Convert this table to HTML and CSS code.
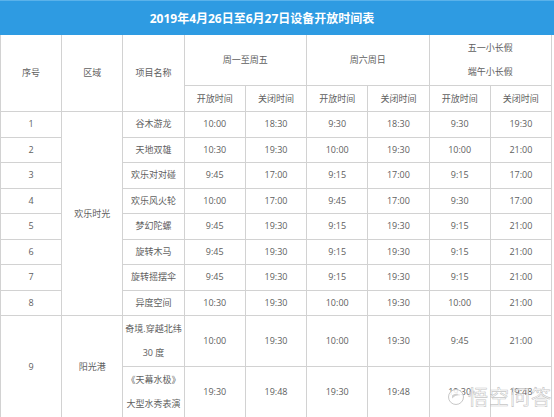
FILE: index.html
```html
<!DOCTYPE html>
<html lang="zh-CN">
<head>
<meta charset="utf-8">
<title>设备开放时间表</title>
<link rel="stylesheet" href="styles.css">
</head>
<body>
<div class="page">
  <div class="title">2019年4月26日至6月27日设备开放时间表</div>
  <table class="sched">
    <colgroup>
      <col><col><col><col><col><col><col><col><col>
    </colgroup>
    <tr class="h1">
      <td rowspan="2">序号</td>
      <td rowspan="2">区域</td>
      <td rowspan="2">项目名称</td>
      <td colspan="2">周一至周五</td>
      <td colspan="2">周六周日</td>
      <td colspan="2" class="two">五一小长假<br>端午小长假</td>
    </tr>
    <tr class="h2">
      <td>开放时间</td><td>关闭时间</td>
      <td>开放时间</td><td>关闭时间</td>
      <td>开放时间</td><td>关闭时间</td>
    </tr>
    <tr class="r"><td>1</td><td rowspan="8">欢乐时光</td><td>谷木游龙</td><td>10:00</td><td>18:30</td><td>9:30</td><td>18:30</td><td>9:30</td><td>19:30</td></tr>
    <tr class="r"><td>2</td><td>天地双雄</td><td>10:30</td><td>19:30</td><td>10:00</td><td>19:30</td><td>10:00</td><td>21:00</td></tr>
    <tr class="r"><td>3</td><td>欢乐对对碰</td><td>9:45</td><td>17:00</td><td>9:15</td><td>17:00</td><td>9:15</td><td>17:00</td></tr>
    <tr class="r"><td>4</td><td>欢乐风火轮</td><td>10:00</td><td>17:00</td><td>9:45</td><td>17:00</td><td>9:30</td><td>17:00</td></tr>
    <tr class="r"><td>5</td><td>梦幻陀螺</td><td>9:45</td><td>19:30</td><td>9:15</td><td>19:30</td><td>9:15</td><td>21:00</td></tr>
    <tr class="r"><td>6</td><td>旋转木马</td><td>9:45</td><td>19:30</td><td>9:15</td><td>19:30</td><td>9:15</td><td>21:00</td></tr>
    <tr class="r"><td>7</td><td>旋转摇摆伞</td><td>9:45</td><td>19:30</td><td>9:15</td><td>19:30</td><td>9:15</td><td>21:00</td></tr>
    <tr class="r"><td>8</td><td>异度空间</td><td>10:30</td><td>19:30</td><td>10:00</td><td>19:30</td><td>10:00</td><td>21:00</td></tr>
    <tr class="big"><td rowspan="2">9</td><td rowspan="2">阳光港</td><td class="two">奇境.穿越北纬<br>30 度</td><td>10:00</td><td>19:30</td><td>10:00</td><td>19:30</td><td>9:45</td><td>21:00</td></tr>
    <tr class="big"><td class="two">《天幕水极》<br>大型水秀表演</td><td>19:30</td><td>19:48</td><td>19:30</td><td>19:48</td><td>19:30</td><td>19:48</td></tr>
  </table>
  <div class="mark">
    <svg class="mark-logo" width="18" height="18" viewBox="0 0 18 18">
      <circle cx="9" cy="9" r="7.5" fill="rgba(255,255,255,0.85)" stroke="#c8c8c8" stroke-width="1"/>
      <path d="M5 7.5 Q9 4 13 7.5 Q9 6.5 5 10.5 Z" fill="#d0d0d0"/>
    </svg>
    <span class="mark-text">悟空问答</span>
  </div>
</div>
</body>
</html>
```
FILE: styles.css
```css
html, body {
  margin: 0;
  padding: 0;
  background: #ffffff;
}
.page {
  position: relative;
  width: 554px;
  height: 417px;
  overflow: hidden;
  font-family: "Open Sans", "Noto Sans CJK SC", sans-serif;
}
.title {
  height: 35px;
  line-height: 35px;
  background: #2e9be2;
  border-top: 1px solid #5ab2ea;
  box-sizing: border-box;
  padding-right: 30px;
  color: #ffffff;
  font-weight: bold;
  font-size: 12px;
  text-align: center;
  font-family: "Open Sans", "Noto Sans CJK SC", sans-serif;
}
.sched {
  width: 552px;
  table-layout: fixed;
  border-collapse: collapse;
  color: #606060;
  font-size: 9px;
}
.sched td {
  border: 1px solid #d2d2d2;
  text-align: center;
  vertical-align: middle;
  padding: 0;
  line-height: 12px;
}
.sched tr:first-child td {
  border-top: none;
}
.h1 td { height: 50px; }
.h2 td { height: 25px; }
.r td { height: 24.5px; }
.big td { height: 50px; }
.sched td.two {
  line-height: 24.5px;
}
.mark {
  position: absolute;
  right: 2px;
  bottom: 6px;
  display: flex;
  align-items: center;
  gap: 3px;
}
.mark-text {
  font-size: 20px;
  color: rgba(255, 255, 255, 0.75);
  -webkit-text-stroke: 0.6px rgba(170, 170, 170, 0.7);
  font-family: "Noto Sans CJK SC", sans-serif;
  letter-spacing: 1px;
}
```
